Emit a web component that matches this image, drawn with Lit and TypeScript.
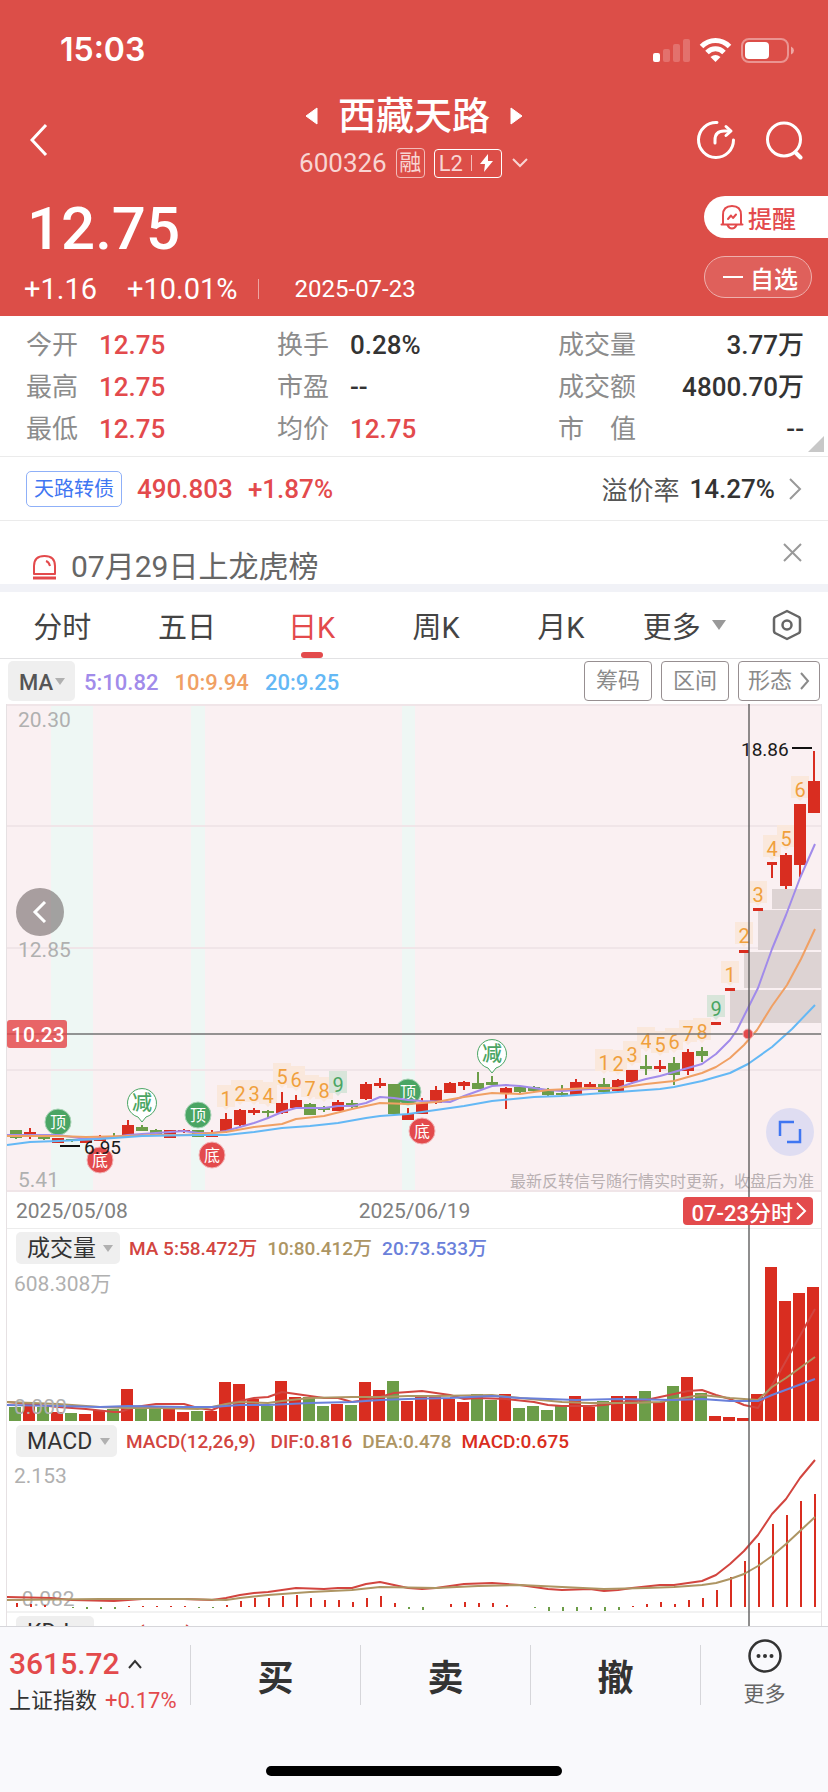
import { LitElement, html, svg, css } from "lit";
import { customElement, state } from "lit/decorators.js";
import { classMap } from "lit/directives/class-map.js";

const STEP = 14;
const FIRST = 16;
const xAt = (i: number) => FIRST + i * STEP;

type Pt = [number, number];
const line = (pts: Pt[]) => pts.map((p) => p.join(",")).join(" ");

/* body top, body bottom, high, low, rising */
type Candle = [number, number, number, number, boolean];
const R = true;
const G = false;
const CANDLES: Candle[] = [
  [426, 434, 426, 435, G], [428, 431, 424, 435, R], [432, 435, 431, 436, G], [434, 439, 434, 439, R],
  [435, 437, 435, 438, G], [436, 439, 436, 439, R], [435, 437, 431, 437, R], [432, 434, 429, 435, G],
  [421, 433, 416, 433, R], [423, 427, 421, 427, G], [426, 431, 425, 431, G], [426, 434, 426, 434, R],
  [426, 428, 425, 429, R], [426, 433, 426, 433, G], [431, 433, 426, 433, R], [415, 427, 409, 429, R],
  [406, 421, 405, 422, R], [406, 409, 404, 411, R], [407, 409, 406, 414, G], [399, 409, 388, 410, R],
  [396, 404, 391, 404, R], [400, 411, 399, 411, G], [404, 406, 402, 408, G], [398, 407, 396, 407, R],
  [399, 403, 396, 404, G], [380, 395, 378, 396, R], [379, 382, 374, 384, R], [380, 410, 380, 410, G],
  [410, 416, 404, 416, R], [399, 410, 394, 410, R], [386, 399, 382, 400, R], [379, 389, 378, 389, R],
  [378, 382, 377, 386, R], [379, 385, 368, 385, G], [378, 381, 372, 381, G], [384, 389, 383, 405, R],
  [383, 388, 383, 389, G], [383, 387, 382, 388, G], [387, 391, 384, 393, G], [389, 391, 381, 392, G],
  [378, 391, 375, 391, R], [380, 383, 378, 384, R], [380, 388, 374, 389, G], [376, 387, 375, 389, R],
  [366, 378, 366, 380, R], [362, 365, 351, 371, G], [362, 365, 356, 368, R], [359, 371, 353, 381, G],
  [348, 367, 345, 371, R], [347, 352, 343, 358, G], [318, 321, 318, 321, R], [284, 287, 284, 287, R],
  [246, 249, 246, 249, R], [204, 207, 204, 207, R], [158, 161, 158, 174, R], [151, 182, 149, 185, R],
  [100, 161, 100, 173, R], [77, 109, 47, 109, R],
];

const MA5: Pt[] = [
  [7, 431], [58, 431], [72, 433], [86, 435], [100, 434], [114, 433], [128, 431], [142, 430], [170, 428],
  [184, 427], [198, 429], [212, 429], [226, 427], [240, 423], [254, 419], [268, 414], [282, 408], [296, 404],
  [324, 404], [338, 402], [352, 402], [366, 399], [380, 393], [394, 394], [408, 396], [422, 397], [450, 398],
  [464, 392], [478, 387], [492, 382], [506, 381], [520, 382], [548, 386], [562, 387], [590, 385], [604, 385],
  [618, 384], [632, 379], [646, 375], [660, 372], [674, 368], [688, 364], [702, 360], [716, 350], [730, 336],
  [737, 326], [748, 304], [758, 284], [772, 245], [786, 211], [800, 174], [815, 140],
];
const MA10: Pt[] = [
  [7, 432], [58, 432], [86, 433], [128, 432], [156, 431], [184, 431], [212, 429], [226, 428], [254, 423],
  [282, 420], [296, 415], [324, 412], [352, 405], [380, 399], [408, 400], [436, 398], [464, 393], [492, 389],
  [520, 390], [548, 386], [590, 384], [618, 384], [646, 380], [674, 377], [702, 369], [716, 363], [730, 354],
  [744, 341], [757, 326], [772, 302], [787, 281], [801, 255], [815, 225],
];
const MA20: Pt[] = [
  [7, 441], [30, 438], [58, 437], [100, 435], [142, 432], [198, 431], [226, 431], [254, 428], [282, 424],
  [310, 422], [338, 419], [366, 414], [380, 412], [408, 410], [436, 406], [464, 402], [492, 397], [534, 393],
  [562, 392], [604, 389], [632, 387], [660, 385], [674, 383], [702, 377], [730, 369], [748, 360], [772, 343],
  [792, 325], [815, 301],
];

/* candle index, label, top of its tag */
const COUNTS: [number, string, number][] = [
  [15, "1", 381], [16, "2", 376], [17, "3", 376], [18, "4", 378], [19, "5", 359], [20, "6", 362],
  [21, "7", 371], [22, "8", 373], [23, "9", 367], [42, "1", 345], [43, "2", 346], [44, "3", 337],
  [45, "4", 323], [46, "5", 327], [47, "6", 324], [48, "7", 316], [49, "8", 314], [50, "9", 291],
  [51, "1", 257], [52, "2", 218], [53, "3", 177], [54, "4", 131], [55, "5", 121], [56, "6", 72],
];

const GAPS = [[772, 185, 20], [758, 206, 40], [744, 248, 36], [730, 286, 33]];
const SIGNALS: [number, number, string][] = [
  [58, 418, "顶"], [198, 411, "顶"], [408, 388, "顶"],
  [100, 456, "底"], [212, 451, "底"], [422, 427, "底"],
];

const VOLUME = [
  14, 19, 14, 9, 8, 7, 11, 12, 32, 13, 12, 12, 9, 10, 10, 39, 37, 22, 15, 40, 24, 24, 15, 17, 16, 39, 31, 40,
  20, 26, 26, 22, 19, 27, 21, 27, 13, 15, 11, 15, 25, 14, 20, 25, 25, 30, 19, 35, 44, 28, 5, 4, 3, 27, 154,
  120, 128, 134,
];
const VOL5: Pt[] = [
  [7, 137], [30, 139], [58, 142], [86, 144], [114, 147], [120, 147], [134, 142], [142, 141], [156, 139],
  [184, 139], [198, 143], [212, 145], [226, 139], [240, 136], [254, 133], [268, 132], [282, 127], [296, 129],
  [310, 131], [324, 133], [338, 133], [352, 137], [366, 135], [380, 132], [394, 128], [408, 127], [422, 126],
  [450, 130], [464, 134], [478, 133], [506, 134], [534, 137], [548, 140], [562, 141], [590, 141], [604, 140],
  [618, 138], [646, 135], [660, 132], [674, 129], [688, 126], [702, 125], [716, 130], [730, 134], [744, 140],
  [758, 143], [777, 112], [792, 85], [815, 44],
];
const VOL10: Pt[] = [
  [7, 137], [58, 139], [100, 142], [128, 143], [156, 143], [198, 144], [212, 142], [226, 139], [240, 137],
  [268, 138], [282, 136], [310, 133], [352, 132], [380, 132], [408, 131], [436, 131], [492, 130], [520, 133],
  [562, 137], [590, 138], [632, 138], [660, 137], [688, 132], [702, 130], [730, 133], [758, 135], [772, 122],
  [786, 113], [815, 92],
];
const VOL20: Pt[] = [
  [7, 140], [58, 141], [100, 142], [128, 141], [184, 142], [212, 142], [240, 140], [268, 140], [310, 138],
  [352, 137], [380, 135], [408, 134], [450, 133], [492, 131], [520, 133], [548, 134], [576, 135], [618, 134],
  [674, 135], [702, 134], [730, 136], [758, 136], [772, 130], [815, 114],
];

const HIST = [
  4, 3, 2, 0, -1, -2, -2, -2, 1, 1, 1, 1, 1, -1, -1, 2, 6, 9, 9, 11, 12, 9, 7, 7, 5, 9, 11, 4, -2, -3, 0, 3, 5,
  4, 4, 2, 0, -1, -4, -5, -4, -3, -4, -3, 1, 3, 5, 3, 7, 9, 17, 30, 46, 64, 83, 92, 106, 113,
];
const DIF: Pt[] = [
  [7, 140], [51, 141], [72, 143], [114, 144], [142, 142], [184, 142], [212, 143], [226, 141], [240, 138],
  [254, 136], [268, 135], [296, 131], [324, 132], [338, 131], [352, 131], [366, 127], [380, 125], [394, 128],
  [408, 131], [422, 132], [436, 131], [464, 127], [492, 126], [520, 128], [548, 132], [562, 133], [590, 132],
  [604, 134], [618, 133], [632, 131], [660, 128], [674, 128], [688, 126], [702, 124], [716, 118], [730, 107],
  [744, 94], [758, 78], [772, 57], [786, 42], [800, 21], [815, 3],
];
const DEA: Pt[] = [
  [7, 143], [100, 142], [184, 142], [226, 143], [240, 141], [268, 138], [310, 135], [352, 133], [380, 130],
  [436, 131], [478, 129], [520, 128], [562, 130], [604, 132], [646, 131], [674, 130], [702, 128], [716, 126],
  [730, 122], [744, 117], [758, 109], [772, 99], [786, 87], [800, 74], [815, 60],
];

const chevron = (cls: string, w: number, h: number, d: string) => html`
  <svg class=${cls} width=${w} height=${h} viewBox="0 0 ${w} ${h}" aria-hidden="true">
    <path d=${d} fill="none" stroke="currentColor" stroke-width="2" />
  </svg>`;

@customElement("price-chart")
export class PriceChart extends LitElement {
  static styles = css`
    :host { display: block; }
    svg { display: block; width: 100%; height: auto; font-family: Roboto, "Noto Sans CJK SC", sans-serif; }
    .bg { fill: #faf0f2; }
    .band { fill: #eef7f4; }
    .grid { stroke: #f0e5e8; stroke-width: 2; }
    .gap { fill: #ddd3d3; }
    .rise { fill: #d92d20; }
    .fall { fill: #6c9d48; }
    .ma { fill: none; stroke-width: 2; stroke-linejoin: round; }
    .m5 { stroke: #a18bea; }
    .m10 { stroke: #f0a064; }
    .m20 { stroke: #64b8f5; }
    .axis { fill: #b0b0b0; font-size: 21px; }
    .note { fill: #b9b0b2; font-size: 16px; text-anchor: end; }
    .extreme { fill: #1a1a1a; font-size: 19px; }
    .tick { fill: #111; }
    .tag { fill: #fae8dc; }
    .tag.nine { fill: #d8e5da; }
    .num { fill: #f0a03c; font-size: 20px; text-anchor: middle; }
    .num.nine { fill: #4aa564; }
    .top { fill: #4aa564; stroke: #a9d3b6; }
    .bottom { fill: #e34a4c; stroke: #f2b2b5; }
    .sig { fill: #fff; font-size: 16px; text-anchor: middle; }
    .balloon { fill: #fff; stroke: #4aa564; }
    .reduce { fill: #4aa564; font-size: 20px; text-anchor: middle; font-weight: 500; }
    .cross { fill: #777; fill-opacity: 0.78; }
    .price { fill: #e34a4c; fill-opacity: 0.84; }
    .pricetext { fill: #fff; font-size: 21px; font-weight: 500; }
  `;

  render() {
    return html`<svg viewBox="7 0 814 488" role="img" aria-label="日K线图">
      <rect class="bg" x="7" y="0" width="814" height="488" />
      ${[[51, 42], [191, 14], [402, 13]].map(([x, w]) => svg`<rect class="band" x=${x} y="0" width=${w} height="488" />`)}
      ${[1, 122, 244, 366, 487].map((y) => svg`<line class="grid" x1="7" x2="821" y1=${y} y2=${y} />`)}
      ${GAPS.map(([x, y, h]) => svg`<rect class="gap" x=${x} y=${y} width=${821 - x} height=${h} />`)}
      ${SIGNALS.map(([x, y, t]) => svg`
        <circle class=${t === "顶" ? "top" : "bottom"} cx=${x} cy=${y} r="13" />
        <text class="sig" x=${x} y=${y + 6}>${t}</text>`)}
      ${[[142, 399], [492, 350]].map(([x, y]) => svg`
        <path class="balloon" d="M${x - 4} ${y + 14} A14.5 14.5 0 1 1 ${x + 4} ${y + 14} L${x} ${y + 19} Z" />
        <text class="reduce" x=${x} y=${y + 7}>减</text>`)}
      ${COUNTS.map(([i, n, y]) => {
        const x = xAt(i);
        const nine = n === "9" ? "nine" : "";
        return svg`
          <path class="tag ${nine}" d="M${x - 9} ${y} h18 v22 h-6 l-3 3 l-3 -3 h-6 Z" />
          <text class="num ${nine}" x=${x} y=${y + 21}>${n}</text>`;
      })}
      ${CANDLES.map(([t, b, h, l, up], i) => {
        const x = xAt(i);
        const w = i >= 50 && i <= 54 ? 10 : 12;
        return svg`<g class=${up ? "rise" : "fall"}>
          <rect x=${x - 1} y=${h} width="2" height=${l - h} />
          <rect x=${x - w / 2} y=${t} width=${w} height=${b - t} />
        </g>`;
      })}
      <polyline class="ma m5" points=${line(MA5)} />
      <polyline class="ma m10" points=${line(MA10)} />
      <polyline class="ma m20" points=${line(MA20)} />
      <text class="axis" x="18" y="23">20.30</text>
      <text class="axis" x="18" y="253">12.85</text>
      <text class="axis" x="18" y="483">5.41</text>
      <text class="extreme" x="741" y="52">18.86</text>
      <rect class="tick" x="792" y="43" width="20" height="2" />
      <text class="extreme" x="84" y="450">6.95</text>
      <rect class="tick" x="60" y="441" width="20" height="2" />
      <text class="note" x="814" y="483">最新反转信号随行情实时更新，收盘后为准</text>
      <rect class="cross" x="7" y="329" width="814" height="2" />
      <circle class="bottom" cx="748" cy="330" r="5" />
      <rect class="price" x="7" y="316" width="60" height="28" rx="3" />
      <text class="pricetext" x="11" y="338">10.23</text>
    </svg>`;
  }
}

@customElement("volume-chart")
export class VolumeChart extends LitElement {
  static styles = css`
    :host { display: block; }
    svg { display: block; width: 100%; height: auto; font-family: Roboto, "Noto Sans CJK SC", sans-serif; }
    .rise { fill: #d92d20; }
    .fall { fill: #6c9d48; }
    .ma { fill: none; stroke-width: 2; stroke-linejoin: round; }
    .m5 { stroke: #d2453f; }
    .m10 { stroke: #ad9563; }
    .m20 { stroke: #6a80da; }
    .axis { fill: #b0b0b0; font-size: 21px; }
  `;

  render() {
    return html`<svg viewBox="7 0 814 157" role="img" aria-label="成交量图">
      <text class="axis" x="14" y="26">608.308万</text>
      ${VOLUME.map((v, i) => svg`<rect class=${CANDLES[i][4] ? "rise" : "fall"} x=${xAt(i) - 7} y=${156 - v} width="12" height=${v} />`)}
      <polyline class="ma m5" points=${line(VOL5)} />
      <polyline class="ma m10" points=${line(VOL10)} />
      <polyline class="ma m20" points=${line(VOL20)} />
      <text class="axis" x="14" y="149">0.000</text>
    </svg>`;
  }
}

@customElement("macd-chart")
export class MacdChart extends LitElement {
  static styles = css`
    :host { display: block; }
    svg { display: block; width: 100%; height: auto; font-family: Roboto, "Noto Sans CJK SC", sans-serif; }
    .rise { fill: #d92d20; }
    .fall { fill: #6c9d48; }
    .ma { fill: none; stroke-width: 2; stroke-linejoin: round; }
    .dif { stroke: #d2453f; }
    .dea { stroke: #ad9563; }
    .axis { fill: #b0b0b0; font-size: 21px; }
  `;

  render() {
    return html`<svg viewBox="7 1 814 153" role="img" aria-label="MACD图">
      <text class="axis" x="14" y="26">2.153</text>
      <text class="axis" x="16" y="149">-0.082</text>
      ${HIST.map((v, i) => svg`<rect class=${v > 0 ? "rise" : "fall"} x=${xAt(i)} y=${v > 0 ? 150 - v : 150} width="2" height=${Math.abs(v)} />`)}
      <polyline class="ma dif" points=${line(DIF)} />
      <polyline class="ma dea" points=${line(DEA)} />
    </svg>`;
  }
}

@customElement("app-root")
export class AppRoot extends LitElement {
  @state() private period = "日K";

  static styles = css`
    :host {
      display: flex;
      flex-direction: column;
      height: 100vh;
      background: #fff;
      color: #333;
      font-family: Roboto, "Noto Sans CJK SC", sans-serif;
    }
    * { box-sizing: border-box; }
    button, select {
      font: inherit;
      color: inherit;
      background: none;
      border: 0;
      padding: 0;
      margin: 0;
      appearance: none;
    }
    svg { display: block; flex: none; }
    .red { color: #e34a4c; }

    .top { background: #dc4e48; color: #fff; flex: none; }
    .status {
      height: 92px;
      padding: 7px 34px 0 60px;
      display: flex;
      align-items: center;
      justify-content: space-between;
      font: 600 32px Inter, sans-serif;
    }
    .nav {
      height: 96px;
      padding: 0 24px;
      display: grid;
      grid-template-columns: 1fr auto 1fr;
      align-items: center;
    }
    .back { justify-self: start; padding: 0 6px; }
    .tools { display: flex; justify-self: end; gap: 28px; }
    .title { display: flex; align-items: center; justify-content: center; gap: 20px; }
    h1 { margin: 0; font-size: 38px; line-height: 46px; font-weight: 500; }
    .code {
      display: flex;
      align-items: center;
      justify-content: center;
      gap: 9px;
      height: 48px;
      font-size: 26px;
      color: #f8d5d3;
    }
    .rong { border: 1px solid #f3bcb9; border-radius: 4px; font-size: 22px; line-height: 28px; width: 29px; text-align: center; }
    .l2 {
      display: flex;
      align-items: center;
      gap: 8px;
      height: 29px;
      padding: 0 8px 0 4px;
      border: 1px solid #fff;
      border-radius: 4px;
      font-size: 22px;
    }
    .l2 i { width: 1px; height: 16px; background: #f3bcb9; }
    .quote { height: 128px; display: flex; justify-content: space-between; }
    .last { font-size: 60px; line-height: 82px; font-weight: 500; padding-left: 27px; }
    .change { display: flex; align-items: center; font-size: 29px; line-height: 38px; padding-left: 24px; }
    .change span:nth-child(2) { margin-left: 30px; }
    .change i { width: 1px; height: 20px; background: #eda5a2; margin: 0 36px 0 20px; }
    .change time { font-size: 24px; }
    .pills { display: flex; flex-direction: column; gap: 18px; padding-top: 8px; }
    .remind, .fav { height: 42px; display: flex; align-items: center; font-size: 24px; font-weight: 500; white-space: nowrap; }
    .remind { background: #fff; color: #e34a4c; border-radius: 21px 0 0 21px; padding: 0 0 0 16px; gap: 4px; width: 124px; }
    .fav { border: 1px solid #eeb0ad; background: #df605b; border-radius: 21px; width: 108px; padding: 0 0 0 18px; gap: 7px; }

    .stats {
      margin: 0;
      height: 141px;
      flex: none;
      padding: 8px 24px 0 26px;
      display: grid;
      grid-template-columns: 251px 281px 1fr;
      grid-auto-rows: 42px;
      border-bottom: 1px solid #ebebeb;
      position: relative;
      font-size: 26px;
      line-height: 42px;
    }
    .stats div { display: flex; gap: 21px; }
    .stats .wide { justify-content: space-between; }
    dt { color: #8c8c8c; }
    dd { margin: 0; font-weight: 500; }
    .corner { position: absolute; right: 4px; bottom: 4px; }
    .bond {
      height: 64px;
      flex: none;
      padding: 0 26px;
      display: flex;
      align-items: center;
      border-bottom: 1px solid #ebebeb;
      font-size: 26px;
      font-weight: 500;
    }
    .bond a {
      font-size: 20px;
      line-height: 34px;
      color: #3f76f2;
      border: 1px solid #8fb0f8;
      border-radius: 5px;
      padding: 0 7px;
      text-decoration: none;
      font-weight: 400;
    }
    .bond .red { margin-left: 15px; }
    .bond .rate { margin-left: auto; font-weight: 400; color: #555; }
    .bond b { font-weight: 500; margin: 0 13px 0 10px; }
    .bond svg { color: #999; }
    .notice {
      height: 63px;
      flex: none;
      padding: 21px 26px 0 32px;
      display: flex;
      align-items: flex-start;
      gap: 14px;
      font-size: 30px;
      line-height: 50px;
      color: #666;
      font-weight: 400;
    }
    .notice svg { margin-top: 12px; }
    .notice button { margin-left: auto; color: #999; }
    .notice button svg { margin-top: 1px; }

    .tabs {
      flex: none;
      height: 75px;
      border-top: 8px solid #f1f2f7;
      border-bottom: 1px solid #e2e2e4;
      display: flex;
      font-size: 29px;
      color: #444;
    }
    .tabs button { flex: 124 1 0; position: relative; }
    .tabs .more { flex: 122 1 0; display: flex; align-items: center; justify-content: center; gap: 11px; }
    .tabs .set { flex: 82 1 0; display: flex; align-items: center; justify-content: center; color: #666; }
    .tabs .on { color: #e34a4c; }
    .tabs .on::after {
      content: "";
      position: absolute;
      left: calc(50% - 11px);
      bottom: 0;
      width: 22px;
      height: 6px;
      border-radius: 3px;
      background: #e34a4c;
    }

    .ma-row {
      flex: none;
      height: 45px;
      padding: 2px 8px 3px;
      display: flex;
      gap: 9px;
      font-size: 22px;
      font-weight: 500;
      line-height: 44px;
    }
    .ma-row .vals { display: flex; gap: 16px; margin-right: auto; }
    .ma-row button {
      border: 1px solid #978f91;
      border-radius: 4px;
      padding: 0 11px;
      color: #8a8a8a;
      font-size: 22px;
      font-weight: 400;
      line-height: 36px;
      display: flex;
      align-items: center;
      gap: 8px;
    }
    .ma-row button:last-child { padding: 0 9px; }
    .pick { display: grid; align-items: center; background: #efefef; border-radius: 5px; color: #333; }
    .pick select, .pick svg { grid-area: 1 / 1; }
    .pick svg { justify-self: end; pointer-events: none; }
    .pick.ma { color: #555; width: 67px; }
    .pick.ma select { padding-left: 11px; }
    .pick.ma svg { margin: 0 10px 4px 0; }
    .pick.sub { height: 32px; font: 400 23px Roboto, "Noto Sans CJK SC", sans-serif; }
    .pick.sub select { padding: 0 24px 0 11px; }
    .pick.sub svg { margin-right: 7px; }
    .v5 { color: #a18bea; }
    .v10 { color: #f0a064; }
    .v20 { color: #64b8f5; }

    .charts {
      flex: 1 1 0;
      min-height: 0;
      overflow: hidden;
      position: relative;
      margin: 0 6px;
      border: 0 solid #e6e1e3;
      border-width: 0 1px;
    }
    .price { position: relative; }
    .prev, .expand {
      position: absolute;
      width: 48px;
      height: 48px;
      border-radius: 50%;
      display: grid;
      place-items: center;
    }
    .prev { left: 9px; top: 184px; background: rgba(85, 75, 75, 0.5); color: #fff; }
    .expand { right: 7px; top: 404px; background: #dfddf2; }
    .dates {
      height: 37px;
      padding: 2px 8px 0 9px;
      display: grid;
      grid-template-columns: 1fr auto 1fr;
      align-items: center;
      border-bottom: 1px solid #ececec;
      font-size: 21px;
      color: #808080;
    }
    .dates a {
      justify-self: end;
      display: flex;
      align-items: center;
      gap: 2px;
      height: 28px;
      padding: 0 6px 0 9px;
      border-radius: 4px;
      background: #e34a4c;
      color: #fff;
      font-size: 22px;
      font-weight: 500;
      text-decoration: none;
      position: relative;
      z-index: 2;
    }
    .head { height: 36px; padding: 3px 9px 0; display: flex; align-items: flex-start; gap: 9px; font-size: 19px; font-weight: 500; line-height: 34px; }
    .head .vals { display: flex; gap: 10px; }
    .c1 { color: #d2453f; }
    .c2 { color: #ad9563; }
    .c3 { color: #6a80da; }
    .c4 { color: #d92d20; }
    .rule { border-bottom: 2px solid #f2f2f2; }
    .cross { position: absolute; z-index: 1; left: 91%; top: 0; bottom: 0; width: 2px; background: rgba(90, 88, 88, 0.68); pointer-events: none; }

    .bar { flex: none; height: 166px; background: #f9f9fc; border-top: 1px solid #d6d6da; }
    .actions { display: grid; grid-template-columns: 190px 1fr 1fr 1fr 128px; height: 96px; padding-top: 18px; }
    .actions > * { height: 60px; border-left: 1px solid #d6d6da; }
    .actions > :first-child { border: 0; }
    .actions .index { height: 74px; padding-left: 9px; text-align: left; font-size: 22px; }
    .index > span { display: flex; align-items: center; gap: 8px; line-height: 37px; white-space: nowrap; }
    .index .pts { font-size: 30px; font-weight: 500; line-height: 37px; }
    .trade { font-size: 36px; font-weight: 700; }
    .actions .dots { display: flex; flex-direction: column; align-items: center; justify-content: center; gap: 4px; font-size: 21px; line-height: 34px; color: #666; }
    .home { width: 296px; height: 10px; border-radius: 5px; background: #000; margin: 43px auto 0; }
  `;

  private stat(label: string, value: string, cls = "", wide = false) {
    return html`<div class=${classMap({ wide })}><dt>${label}</dt><dd class=${cls}>${value}</dd></div>`;
  }

  private pick(cls: string, label: string, name: string) {
    return html`<label class="pick ${cls}">
      <select aria-label=${name}><option>${label}</option></select>
      <svg width="10" height="7" viewBox="0 0 10 7" aria-hidden="true"><path d="M0 0H10L5 7Z" fill="#b0b0b0" /></svg>
    </label>`;
  }

  render() {
    return html`
      <header class="top">
        <div class="status">
          <span>15:03</span>
          <svg width="142" height="26" viewBox="0 0 142 26" fill="#fff" aria-hidden="true">
            <rect x="1" y="16" width="7" height="9" rx="2" />
            <g opacity=".2">
              <rect x="11" y="12" width="7" height="13" rx="2" />
              <rect x="21" y="7" width="7" height="18" rx="2" />
              <rect x="31" y="2" width="7" height="23" rx="2" />
            </g>
            <g fill="none" stroke="#fff" stroke-width="5">
              <path d="M49.500 9.500C57.500 1.500 69.500 1.500 77.500 9.500" />
              <path d="M55 15.500C60 10.500 67 10.500 72 15.500" />
            </g>
            <path d="M63.500 25L58.500 20Q63.500 16 68.500 20Z" />
            <rect x="90" y="2" width="46" height="23" rx="7" fill="none" stroke="#fff" stroke-width="2" opacity=".4" />
            <rect x="93" y="5" width="24" height="17" rx="4" />
            <path d="M139 9.500Q142 11 142 13.500Q142 16 139 17.500Z" opacity=".5" />
          </svg>
        </div>
        <nav class="nav">
          <button class="back" aria-label="返回">
            <svg width="18" height="34" viewBox="0 0 18 34"><path d="M16 2L2 17L16 32" fill="none" stroke="#fff" stroke-width="3" /></svg>
          </button>
          <div>
            <div class="title">
              <button aria-label="上一只"><svg width="13" height="18" viewBox="0 0 13 18"><path d="M12 1V17L1 9Z" fill="#fff" stroke="#fff" stroke-linejoin="round" /></svg></button>
              <h1>西藏天路</h1>
              <button aria-label="下一只"><svg width="13" height="18" viewBox="0 0 13 18"><path d="M1 1V17L12 9Z" fill="#fff" stroke="#fff" stroke-linejoin="round" /></svg></button>
            </div>
            <div class="code">
              <span>600326</span>
              <span class="rong">融</span>
              <span class="l2">L2<i></i>
                <svg width="13" height="18" viewBox="0 0 13 18"><path d="M8 0L0 10H5L4 18L13 7H8Z" fill="#fff" /></svg>
              </span>
              ${chevron("", 18, 12, "M2 2L9 9L16 2")}
            </div>
          </div>
          <div class="tools">
            <button aria-label="分享">
              <svg width="40" height="40" viewBox="0 0 40 40" fill="none" stroke="#fff" stroke-width="3" stroke-linecap="round" stroke-linejoin="round">
                <path d="M21 2.500A17.500 17.500 0 1 0 37.500 20" />
                <path d="M19 23V20Q19 11 28 11H34" />
                <path d="M30 6.500L35 11L30 15.500" />
              </svg>
            </button>
            <button aria-label="搜索">
              <svg width="40" height="40" viewBox="0 0 40 40" fill="none" stroke="#fff" stroke-width="3" stroke-linecap="round">
                <circle cx="20" cy="19.500" r="16.500" /><path d="M32 33L36.500 37.500" stroke-width="4" />
              </svg>
            </button>
          </div>
        </nav>
        <section class="quote">
          <div>
            <div class="last">12.75</div>
            <div class="change"><span>+1.16</span><span>+10.01%</span><i></i><time>2025-07-23</time></div>
          </div>
          <div class="pills">
            <button class="remind">
              <svg width="24" height="26" viewBox="0 0 24 26" fill="none" stroke="#e34a4c" stroke-width="2" stroke-linejoin="round" stroke-linecap="round">
                <path d="M1.500 20.500H22.500M3 20V11Q3 2 12 2Q21 2 21 11V20" />
                <path d="M7.500 21Q9 24.500 12 24.500Q15 24.500 16.500 21" />
                <path d="M8 15L11 11.500L13 14L16 10.500" />
              </svg>提醒
            </button>
            <button class="fav">
              <svg width="20" height="2" viewBox="0 0 20 2"><path d="M0 1H20" stroke="#fff" stroke-width="2" /></svg>自选
            </button>
          </div>
        </section>
      </header>

      <dl class="stats">
        ${this.stat("今开", "12.75", "red")}${this.stat("换手", "0.28%")}${this.stat("成交量", "3.77万", "", true)}
        ${this.stat("最高", "12.75", "red")}${this.stat("市盈", "--")}${this.stat("成交额", "4800.70万", "", true)}
        ${this.stat("最低", "12.75", "red")}${this.stat("均价", "12.75", "red")}${this.stat("市　值", "--", "", true)}
        <svg class="corner" width="16" height="16" viewBox="0 0 16 16" aria-hidden="true"><path d="M16 0V16H0Z" fill="#c8c8c8" /></svg>
      </dl>

      <section class="bond">
        <a href="#bond">天路转债</a>
        <span class="red">490.803</span><span class="red">+1.87%</span>
        <span class="rate">溢价率</span><b>14.27%</b>
        ${chevron("", 14, 24, "M2 2L12 12L2 22")}
      </section>

      <section class="notice">
        <svg width="25" height="26" viewBox="0 0 25 26" fill="none" stroke="#e34a4c" stroke-width="2" aria-hidden="true">
          <path d="M2 20V12Q2 2 12.500 2Q23 2 23 12V20Z" stroke-linejoin="round" /><path d="M1 24H24" stroke-width="3" /><path d="M14 7Q17 8 18 12" />
        </svg>
        <span>07月29日上龙虎榜</span>
        <button aria-label="关闭"><svg width="19" height="19" viewBox="0 0 19 19"><path d="M1 1L18 18M18 1L1 18" stroke="currentColor" stroke-width="2" /></svg></button>
      </section>

      <nav class="tabs" role="tablist">
        ${["分时", "五日", "日K", "周K", "月K"].map((t) => html`
          <button role="tab" class=${classMap({ on: t === this.period })} aria-selected=${t === this.period} @click=${() => (this.period = t)}>${t}</button>`)}
        <button class="more">更多<svg width="14" height="10" viewBox="0 0 14 10"><path d="M0 0H14L7 10Z" fill="#999" /></svg></button>
        <button class="set" aria-label="设置">
          <svg width="30" height="32" viewBox="0 0 30 32" fill="none" stroke="currentColor" stroke-width="2.500" stroke-linejoin="round">
            <path d="M15 2L27 8Q28 9 28 10V22Q28 23 27 24L15 30L3 24Q2 23 2 22V10Q2 9 3 8Z" /><circle cx="15" cy="16" r="4.500" />
          </svg>
        </button>
      </nav>

      <div class="ma-row">
        ${this.pick("ma", "MA", "主图指标")}
        <div class="vals"><span class="v5">5:10.82</span><span class="v10">10:9.94</span><span class="v20">20:9.25</span></div>
        <button>筹码</button><button>区间</button><button>形态${chevron("", 10, 18, "M1 1L8 9L1 17")}</button>
      </div>

      <main class="charts">
        <div class="price">
          <price-chart></price-chart>
          <button class="prev" aria-label="向前"><svg width="16" height="22" viewBox="0 0 16 22"><path d="M13 1L3 11L13 21" fill="none" stroke="currentColor" stroke-width="3" /></svg></button>
          <button class="expand" aria-label="全屏">
            <svg width="24" height="24" viewBox="0 0 24 24" fill="none" stroke="#3f76f2" stroke-width="2.500"><path d="M2 16V2H16M22 9V22H9" /></svg>
          </button>
        </div>
        <div class="dates"><span>2025/05/08</span><span>2025/06/19</span><a href="#intraday">07-23分时${chevron("", 12, 18, "M2 1L10 9L2 17")}</a></div>
        <div class="head">
          ${this.pick("sub", "成交量", "副图指标一")}
          <div class="vals"><span class="c1">MA 5:58.472万</span><span class="c2">10:80.412万</span><span class="c3">20:73.533万</span></div>
        </div>
        <volume-chart></volume-chart>
        <div class="head">
          ${this.pick("sub", "MACD", "副图指标二")}
          <div class="vals"><span class="c1">MACD(12,26,9)</span><span class="c1">&nbsp;DIF:0.816</span><span class="c2">DEA:0.478</span><span class="c4">MACD:0.675</span></div>
        </div>
        <macd-chart class="rule"></macd-chart>
        <div class="head">
          ${this.pick("sub", "KDJ", "副图指标三")}
          <div class="vals"><span class="c1">KDJ(9,3,3)</span><span class="c1">K:80.334</span><span class="c2">D:67.479</span><span class="c3">J:106.828</span></div>
        </div>
        <div class="cross"></div>
      </main>

      <footer class="bar">
        <div class="actions">
          <button class="index">
            <span><span class="red pts">3615.72</span>${chevron("", 14, 10, "M1 9L7 2L13 9")}</span>
            <span>上证指数<span class="red">+0.17%</span></span>
          </button>
          <button class="trade">买</button>
          <button class="trade">卖</button>
          <button class="trade">撤</button>
          <button class="dots">
            <svg width="34" height="34" viewBox="0 0 34 34"><circle cx="17" cy="17" r="15.500" fill="none" stroke="#333" stroke-width="2.500" /><g fill="#333"><circle cx="10.500" cy="17" r="2" /><circle cx="17" cy="17" r="2" /><circle cx="23.500" cy="17" r="2" /></g></svg>
            更多
          </button>
        </div>
        <div class="home"></div>
      </footer>
    `;
  }
}
